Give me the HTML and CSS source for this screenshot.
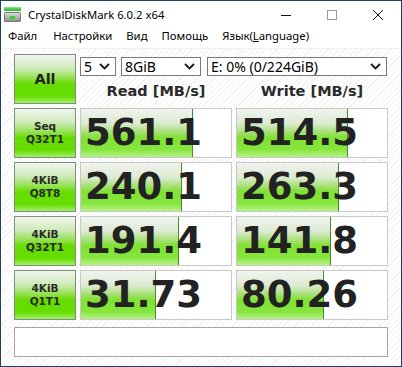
FILE: index.html
```html
<!DOCTYPE html>
<html lang="ru">
<head>
  <meta charset="UTF-8">
  <title>CrystalDiskMark 6.0.2 x64</title>
  <link rel="stylesheet" href="styles.css">
</head>
<body>
  <div class="window">
    <div class="titlebar">
      <svg class="app-icon" width="18" height="16" viewBox="0 0 18 16">
        <defs>
          <linearGradient id="disk" x1="0" y1="0" x2="0" y2="1">
            <stop offset="0" stop-color="#e4e4e4"/>
            <stop offset="1" stop-color="#8a8a8a"/>
          </linearGradient>
        </defs>
        <rect x="0" y="0" width="17" height="4" fill="#3cc23c"/>
        <rect x="0" y="0" width="17" height="1.5" fill="#7fe07f"/>
        <rect x="0" y="5" width="17" height="10" rx="1" fill="url(#disk)"/>
        <rect x="0.5" y="5.5" width="16" height="9" rx="1" fill="none" stroke="#777" stroke-width="1"/>
        <rect x="6" y="9" width="5" height="3" fill="#2fd22f"/>
      </svg>
      <span class="title">CrystalDiskMark 6.0.2 x64</span>
      <div class="controls">
        <div class="ctl">
          <svg width="10" height="10" viewBox="0 0 10 10"><path d="M0 5.5h10" stroke="#111" stroke-width="1"/></svg>
        </div>
        <div class="ctl">
          <svg width="10" height="10" viewBox="0 0 10 10"><rect x="0.5" y="0.5" width="9" height="9" fill="none" stroke="#999" stroke-width="1"/></svg>
        </div>
        <div class="ctl">
          <svg width="10" height="10" viewBox="0 0 10 10"><path d="M0 0L10 10M10 0L0 10" stroke="#111" stroke-width="1"/></svg>
        </div>
      </div>
    </div>

    <div class="menubar">
      <span class="first">Файл</span>
      <span>Настройки</span>
      <span>Вид</span>
      <span>Помощь</span>
      <span>Язык(<u>L</u>anguage)</span>
    </div>

    <div class="client">
      <div class="board">
        <div class="label all">All</div>
        <div class="top">
          <div class="selects">
            <div class="combo c-count"><span>5</span><svg class="chev" width="11" height="7" viewBox="0 0 11 7"><path d="M1 1l4.5 4.5L10 1" fill="none" stroke="#1a1a1a" stroke-width="1.8"/></svg></div>
            <div class="combo c-size"><span>8GiB</span><svg class="chev" width="11" height="7" viewBox="0 0 11 7"><path d="M1 1l4.5 4.5L10 1" fill="none" stroke="#1a1a1a" stroke-width="1.8"/></svg></div>
            <div class="combo c-drive"><span>E: 0% (0/224GiB)</span><svg class="chev" width="11" height="7" viewBox="0 0 11 7"><path d="M1 1l4.5 4.5L10 1" fill="none" stroke="#1a1a1a" stroke-width="1.8"/></svg></div>
          </div>
          <div class="heads">
            <div>Read [MB/s]</div>
            <div>Write [MB/s]</div>
          </div>
        </div>

        <div class="label">Seq<br>Q32T1</div>
        <div class="cell"><div class="bar" style="width:111px"></div><span class="num">561.1</span></div>
        <div class="cell"><div class="bar" style="width:110px"></div><span class="num">514.5</span></div>

        <div class="label">4KiB<br>Q8T8</div>
        <div class="cell"><div class="bar" style="width:100px"></div><span class="num">240.1</span></div>
        <div class="cell"><div class="bar" style="width:101px"></div><span class="num">263.3</span></div>

        <div class="label">4KiB<br>Q32T1</div>
        <div class="cell"><div class="bar" style="width:97px"></div><span class="num">191.4</span></div>
        <div class="cell"><div class="bar" style="width:93px"></div><span class="num">141.8</span></div>

        <div class="label">4KiB<br>Q1T1</div>
        <div class="cell"><div class="bar" style="width:74px"></div><span class="num">31.73</span></div>
        <div class="cell"><div class="bar" style="width:86px"></div><span class="num">80.26</span></div>
      </div>

      <div class="comment"></div>
    </div>
  </div>
</body>
</html>
```

FILE: styles.css
```css
html, body {
  margin: 0;
  padding: 0;
}

body {
  width: 402px;
  height: 367px;
  overflow: hidden;
  background: #fff;
}

.window {
  box-sizing: border-box;
  width: 402px;
  height: 367px;
  border: 1px solid #22405f;
  display: flex;
  flex-direction: column;
}

/* Заголовок окна */
.titlebar {
  height: 27px;
  display: flex;
  align-items: center;
  background: #fff;
  font-family: "Noto Sans", sans-serif;
  font-size: 11.3px;
  color: #000;
}

.app-icon {
  margin: 0 6px 0 3px;
}

.title {
  flex: 1;
}

.controls {
  display: flex;
  height: 27px;
}

.ctl {
  width: 46px;
  display: flex;
  align-items: center;
  justify-content: center;
}

/* Меню */
.menubar {
  height: 20px;
  display: flex;
  gap: 14px;
  padding: 0 0 0 7px;
  font-family: "Noto Sans", sans-serif;
  font-size: 11.3px;
  line-height: 16px;
  color: #000;
  background: #fff;
  border-bottom: 1px solid #f0f0f0;
}

.menubar .first {
  margin-right: 2px;
}

.menubar u {
  text-decoration-thickness: 1px;
}

/* Рабочая область */
.client {
  flex: 1;
  padding: 5px 13px 0 13px;
  background: repeating-linear-gradient(135deg, #ffffff 0, #ffffff 3px, #f1f1f1 3px, #f1f1f1 4px);
}

.board {
  display: grid;
  grid-template-columns: 62px 152px 152px;
  grid-auto-rows: 50px;
  gap: 4px;
}

.label {
  box-sizing: border-box;
  border: 1px solid #7f8d7f;
  background: linear-gradient(#f2f6ef 0%, #cdeab8 28%, #94e150 48%, #66dd00 60%, #66dd00 86%, #a2ef68 100%);
  display: flex;
  align-items: center;
  justify-content: center;
  text-align: center;
  font-family: "DejaVu Sans", sans-serif;
  font-weight: bold;
  font-size: 10.5px;
  line-height: 13px;
  color: #2a2a2a;
}

.label.all {
  font-size: 14.5px;
  color: #222;
}

.top {
  grid-column: span 2;
  display: flex;
  flex-direction: column;
}

.selects {
  display: flex;
  margin-top: 3px;
  height: 19px;
}

.combo {
  box-sizing: border-box;
  height: 19px;
  border: 1px solid #7a7a7a;
  background: #fff;
  display: flex;
  align-items: center;
  justify-content: space-between;
  padding: 0 5px 0 3px;
  font-family: "Noto Sans", sans-serif;
  font-size: 14px;
  color: #000;
}

.c-count {
  width: 36px;
  margin-right: 5px;
}

.c-size {
  width: 80px;
  margin-right: 6px;
}

.c-drive {
  width: 180px;
}

.heads {
  display: grid;
  grid-template-columns: 152px 152px;
  gap: 4px;
  margin-top: 7px;
  font-family: "DejaVu Sans", sans-serif;
  font-weight: bold;
  font-size: 14.5px;
  color: #2a2a2a;
  text-align: center;
}

.cell {
  position: relative;
  box-sizing: border-box;
  border: 1px solid #c8c8c8;
  background: #fff;
  display: flex;
  align-items: center;
  padding-left: 4px;
}

.bar {
  position: absolute;
  left: 0;
  top: 0;
  bottom: 0;
  border-right: 1px solid #3f8f2a;
  background: linear-gradient(#f1f3f0 0%, #dcebd1 30%, #a2df6c 50%, #80e232 60%, #86e63c 84%, #b6f286 100%);
}

.num {
  position: relative;
  font-family: "DejaVu Sans", sans-serif;
  font-weight: bold;
  font-size: 37px;
  line-height: 40px;
  color: #222;
}

.comment {
  box-sizing: border-box;
  margin-top: 7px;
  height: 30px;
  border: 1px solid #a6a6a6;
  background: #fff;
}
```
